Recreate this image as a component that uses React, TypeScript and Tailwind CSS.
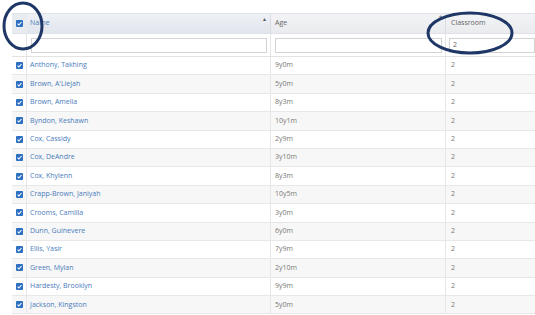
import React from "react";

interface Student {
  name: string;
  age: string;
  room: string;
}

const STUDENTS: Student[] = [
  { name: "Anthony, Takhing", age: "9y0m", room: "2" },
  { name: "Brown, A'Liejah", age: "5y0m", room: "2" },
  { name: "Brown, Amelia", age: "8y3m", room: "2" },
  { name: "Byndon, Keshawn", age: "10y1m", room: "2" },
  { name: "Cox, Cassidy", age: "2y9m", room: "2" },
  { name: "Cox, DeAndre", age: "3y10m", room: "2" },
  { name: "Cox, Khylenn", age: "8y3m", room: "2" },
  { name: "Crapp-Brown, Janiyah", age: "10y5m", room: "2" },
  { name: "Crooms, Camilla", age: "3y0m", room: "2" },
  { name: "Dunn, Guinevere", age: "6y0m", room: "2" },
  { name: "Ellis, Yasir", age: "7y9m", room: "2" },
  { name: "Green, Mylan", age: "2y10m", room: "2" },
  { name: "Hardesty, Brooklyn", age: "9y9m", room: "2" },
  { name: "Jackson, Kingston", age: "5y0m", room: "2" },
];

const COLS = "grid grid-cols-[15px_244px_175px_1fr]";

function Check() {
  return (
    <svg width="7" height="7" viewBox="0 0 7 7" className="block">
      <rect x="0" y="0" width="7" height="7" rx="1" fill="#2d6fc0" />
      <path d="M1.6 3.7 L2.9 5 L5.5 2" stroke="#fff" strokeWidth="1.1" fill="none" />
    </svg>
  );
}

export default function App() {
  return (
    <div
      className="relative h-[315px] w-[535px] overflow-hidden bg-white pl-[12px] pt-[13px]"
      style={{ fontFamily: '"Open Sans", "Liberation Sans", sans-serif' }}
    >
      {/* header */}
      <div className={`${COLS} h-[21px] border-y border-[#dfe3e8] text-[7px]`}>
        <div className="flex items-center justify-center bg-[#e8ecf1]">
          <Check />
        </div>
        <div className="relative flex items-center border-r border-[#d9dde2] bg-gradient-to-b from-[#eef1f5] to-[#e1e6ed] pl-[3px] text-[#4a7bbb]">
          Name
          <span className="absolute right-[3px] top-[2px] text-[5px] text-[#555]">▲</span>
        </div>
        <div className="relative flex items-center border-r border-[#d9dde2] bg-gradient-to-b from-[#f3f4f6] to-[#e9ebee] pl-[4px] text-[#666]">
          Age
          <span className="absolute right-[2px] top-[1px] text-[6px] leading-none text-[#666]">⇕</span>
        </div>
        <div className="flex items-center bg-gradient-to-b from-[#f3f4f6] to-[#e9ebee] pl-[5px] text-[#666]">Classroom</div>
      </div>

      {/* filter row */}
      <div className={`${COLS} h-[23px] border-b border-[#e3e3e3] text-[7px]`}>
        <div className="border-r border-[#e6e6e6]" />
        <div className="flex items-center border-r border-[#e6e6e6] pl-[4px] pr-[3px]">
          <div className="h-[15px] w-full border border-[#d3d3d3] bg-white" />
        </div>
        <div className="flex items-center border-r border-[#e6e6e6] pl-[4px] pr-[3px]">
          <div className="h-[15px] w-full border border-[#d3d3d3] bg-white" />
        </div>
        <div className="flex items-center pl-[3px]">
          <div className="flex h-[15px] w-full items-center border border-[#d3d3d3] bg-white pl-[3px] text-[#666]">2</div>
        </div>
      </div>

      {/* rows */}
      {STUDENTS.map((s, i) => (
        <div
          key={s.name}
          className={`${COLS} h-[18.4px] border-b border-[#e8e8e8] text-[7px] ${i % 2 === 1 ? "bg-[#f7f7f7]" : "bg-white"}`}
        >
          <div className="flex items-center justify-center border-r border-[#e6e6e6]">
            <Check />
          </div>
          <div className="flex items-center border-r border-[#e6e6e6] pl-[3px] text-[#4a7bbb]">{s.name}</div>
          <div className="flex items-center border-r border-[#e6e6e6] pl-[4px] text-[#777]">{s.age}</div>
          <div className="flex items-center pl-[5px] text-[#777]">{s.room}</div>
        </div>
      ))}

      {/* annotation circles */}
      <svg className="pointer-events-none absolute left-0 top-0" width="535" height="315">
        <ellipse cx="23" cy="26" rx="19" ry="23" fill="none" stroke="#1f3766" strokeWidth="3" />
        <ellipse cx="470" cy="33" rx="42" ry="20" fill="none" stroke="#1f3766" strokeWidth="3" />
      </svg>
    </div>
  );
}
